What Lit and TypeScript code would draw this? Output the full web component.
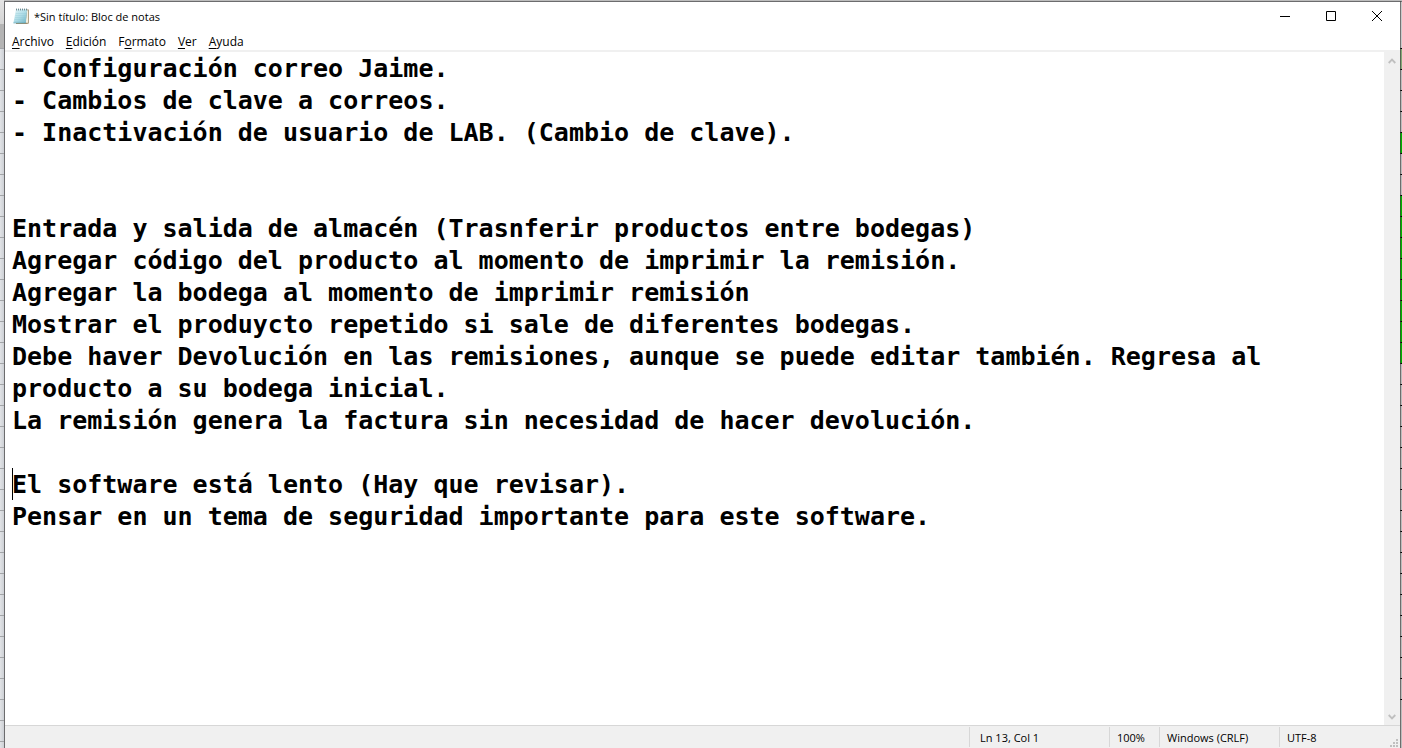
import { LitElement, html, css, svg } from "lit";
import { customElement, state } from "lit/decorators.js";

const NOTES = [
  "- Configuración correo Jaime.",
  "- Cambios de clave a correos.",
  "- Inactivación de usuario de LAB. (Cambio de clave).",
  "",
  "",
  "Entrada y salida de almacén (Trasnferir productos entre bodegas)",
  "Agregar código del producto al momento de imprimir la remisión.",
  "Agregar la bodega al momento de imprimir remisión",
  "Mostrar el produycto repetido si sale de diferentes bodegas.",
  "Debe haver Devolución en las remisiones, aunque se puede editar también. Regresa al producto a su bodega inicial.",
  "La remisión genera la factura sin necesidad de hacer devolución.",
  "",
  "El software está lento (Hay que revisar).",
  "Pensar en un tema de seguridad importante para este software.",
].join("\n");

/* [text before the mnemonic, mnemonic, rest] */
const MENUS = [
  ["", "A", "rchivo"],
  ["", "E", "dición"],
  ["F", "o", "rmato"],
  ["", "V", "er"],
  ["", "A", "yuda"],
];

const notepadIcon = svg`
  <defs>
    <linearGradient id="sheet" x1="0" y1="0" x2="1" y2="1">
      <stop offset="0" stop-color="#e0f3f6" />
      <stop offset=".5" stop-color="#b0dde7" />
      <stop offset="1" stop-color="#6fb3c4" />
    </linearGradient>
  </defs>
  <path d="M13.6 1.6 15.8 1.6 15.8 15.4 13.6 16 3 16 3 15Z" fill="#a08d6c"/>
  <path d="M14.2 2.2H15V14.8H12.6Z" fill="#f5efe0"/>
  <path d="M3 1.6 14.2 1.6 12.8 15 .4 15Z" fill="url(#sheet)"/>
  <path d="M2.8 5.5H13.6M2.4 7.5H13.4M2 9.5H13.2M1.6 11.5H13M1.2 13.5H12.8" stroke="#8cc5d3" stroke-width=".3"/>
  <path d="M.4 15H12.8" stroke="#5499aa" stroke-width=".6"/>
  <path d="M3.5 .6V2.4M5.5 .6V2.4M7.5 .6V2.4M9.5 .6V2.4M11.5 .6V2.4M13.5 .6V2.4" stroke="#5f7c84" stroke-width=".9"/>`;

@customElement("sheet-edge")
class SheetEdge extends LitElement {
  static styles = css`
    :host {
      display: block;
    }
    :host([side="left"]) {
      background:
        linear-gradient(#e4e4e4, #d4d4d4) 0 0 / 100% 24px no-repeat,
        linear-gradient(#b4b4b4 0 0) 0 24px / 100% 24px no-repeat,
        repeating-linear-gradient(transparent 0 6px, #a3a5a8 6px 7px, transparent 7px 21px),
        linear-gradient(90deg, #e1e3e6, #cdd0d5);
    }
    :host([side="right"]) {
      margin-top: 1px;
      box-shadow: inset 1px 0 rgba(56, 56, 56, 0.6), inset 0 1px rgba(56, 56, 56, 0.6);
      background:
        linear-gradient(#cacaca 0 0) 0 0 / 100% 47px no-repeat,
        repeating-linear-gradient(transparent 0 5px, #000000 5px 6px, transparent 6px 21px) 0 0 / 100% 699px no-repeat,
        linear-gradient(#86a878 0 0) 0 47px / 100% 21px no-repeat,
        linear-gradient(#00b400 0 0) 0 132px / 100% 20px no-repeat,
        linear-gradient(#00b400 0 0) 0 194px / 100% 168px no-repeat,
        #bcbcbc;
    }
  `;
  render() {
    return html``;
  }
}

@customElement("app-root")
class AppRoot extends LitElement {
  @state() private notes = NOTES;

  static styles = css`
    :host {
      display: grid;
      grid-template-columns: 4px minmax(0, 1fr) 2px;
      height: 100vh;
      overflow: hidden;
      font: 11px/16px "Open Sans", "Noto Sans", sans-serif;
      color: #000;
      background: #bdbdbd;
    }
    .window {
      display: flex;
      flex-direction: column;
      min-height: 0;
      border: 1px solid #6c6c6e;
      border-width: 1px 0 0 1px;
      margin-top: 1px;
      background: #fff;
    }
    button {
      font: inherit;
      color: inherit;
      border: 0;
      background: none;
      padding: 0;
    }
    svg {
      display: block;
    }
    .titlebar {
      display: flex;
      align-items: center;
      height: 29px;
      padding-left: 8px;
      gap: 4px;
    }
    .title {
      flex: 1;
      font: inherit;
      margin: 0;
      padding-left: 1px;
    }
    .caption {
      display: grid;
      place-items: center;
      width: 46px;
      height: 28px;
    }
    .controls {
      display: flex;
      align-self: flex-start;
    }
    .menubar {
      display: flex;
      height: 19px;
      gap: 12px;
      padding: 0 7px;
      border-bottom: 2px solid #f0f0f0;
      font-size: 12px;
    }
    .menubar button {
      line-height: 20px;
      padding-top: 1px;
    }
    .menubar u {
      text-underline-offset: 2px;
    }
    .body {
      flex: 1;
      min-height: 0;
      display: flex;
    }
    .editor {
      position: relative;
      flex: 1;
      display: flex;
    }
    textarea {
      flex: 1;
      min-width: 0;
      resize: none;
      overflow: hidden;
      border: 0;
      outline: 0;
      margin: 0;
      padding: 1px 0 0 7px;
      background: #fff;
      color: #000;
      font: bold 25px/32px "DejaVu Sans Mono", "Liberation Mono", monospace;
    }
    .caret {
      position: absolute;
      left: 7px;
      top: 416px;
      width: 1px;
      height: 32px;
      background: #000;
    }
    .scrollbar {
      display: flex;
      flex-direction: column;
      justify-content: space-between;
      width: 16px;
      background: #f0f0f0;
    }
    .scrollbar button {
      display: grid;
      place-items: center;
      height: 17px;
    }
    .status {
      display: flex;
      align-items: stretch;
      height: 22px;
      border-top: 1px solid #d7d7d7;
      background: #f0f0f0;
      line-height: 22px;
    }
    .cell {
      box-sizing: border-box;
      margin-top: 1px;
      height: 20px;
      line-height: 21px;
      border-left: 1px solid #d7d7d7;
      padding-left: 7px;
      white-space: nowrap;
    }
    .spacer {
      flex: 1;
    }
    .position {
      width: 140px;
      padding-left: 10px;
    }
    .zoom {
      width: 50px;
    }
    .eol {
      width: 120px;
    }
    .encoding {
      display: flex;
      justify-content: space-between;
      width: 121px;
      padding-right: 2px;
    }
    .grip {
      align-self: flex-end;
    }
  `;

  private edit(e: Event) {
    this.notes = (e.target as HTMLTextAreaElement).value;
  }

  render() {
    return html`
      <sheet-edge side="left"></sheet-edge>
      <main class="window">
        <header class="titlebar">
          <svg width="16" height="17" viewBox="0 0 16 17" aria-hidden="true">${notepadIcon}</svg>
          <h1 class="title">*Sin título: Bloc de notas</h1>
          <div class="controls">
            <button class="caption" aria-label="Minimizar">
              <svg width="10" height="10"><path d="M0 5.5H10" stroke="#000" /></svg>
            </button>
            <button class="caption" aria-label="Maximizar">
              <svg width="10" height="10"><path d="M.5 .5H9.5V9.5H.5Z" fill="none" stroke="#000" /></svg>
            </button>
            <button class="caption" aria-label="Cerrar">
              <svg width="10" height="10"><path d="M0 0 10 10M10 0 0 10" stroke="#000" /></svg>
            </button>
          </div>
        </header>
        <nav class="menubar">
          ${MENUS.map(([pre, key, rest]) => html`<button>${pre}<u>${key}</u>${rest}</button>`)}
        </nav>
        <section class="body">
          <div class="editor">
            <textarea aria-label="Editor de texto" spellcheck="false" .value=${this.notes} @input=${this.edit}></textarea>
            <span class="caret"></span>
          </div>
          <div class="scrollbar">
            <button aria-label="Subir">
              <svg width="8" height="6"><path d="M.7 5 4 1.6 7.3 5" fill="none" stroke="#bfbfbf" stroke-width="1.8" /></svg>
            </button>
            <button aria-label="Bajar">
              <svg width="8" height="6"><path d="M.7 1 4 4.4 7.3 1" fill="none" stroke="#bfbfbf" stroke-width="1.8" /></svg>
            </button>
          </div>
        </section>
        <footer class="status">
          <span class="spacer"></span>
          <span class="cell position">Ln 13, Col 1</span>
          <span class="cell zoom">100%</span>
          <span class="cell eol">Windows (CRLF)</span>
          <span class="cell encoding">
            <span>UTF-8</span>
            <svg class="grip" width="8" height="8" fill="#bfbfbf" aria-hidden="true">
              <path d="M6 0h2v2h-2zM3 3h2v2h-2zM6 3h2v2h-2zM0 6h2v2h-2zM3 6h2v2h-2zM6 6h2v2h-2z" />
            </svg>
          </span>
        </footer>
      </main>
      <sheet-edge side="right"></sheet-edge>
    `;
  }
}
